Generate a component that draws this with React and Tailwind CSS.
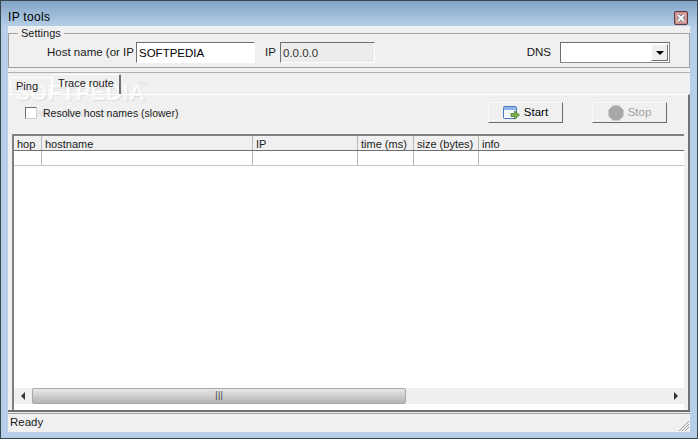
import { useState } from "react";

const columns = [
  { label: "hop", w: "w-[28px]" },
  { label: "hostname", w: "w-[211px]" },
  { label: "IP", w: "w-[105px]" },
  { label: "time (ms)", w: "w-[56px]" },
  { label: "size (bytes)", w: "w-[65px]" },
  { label: "info", w: "flex-1" },
];

const StartIcon = () => (
  <svg width="17" height="16" viewBox="0 0 17 16">
    <rect x="0.5" y="1.5" width="13" height="12" rx="1" fill="#f4f8fd" stroke="#4a78b8" />
    <rect x="1" y="2" width="12" height="3" fill="#8fb4e6" />
    <path d="M8 8.5h3.5V6l5 4-5 4v-2.5H8z" fill="#7fb04e" stroke="#4c7f2c" strokeWidth="0.8" />
  </svg>
);

const StopIcon = () => (
  <svg width="16" height="16" viewBox="0 0 16 16">
    <polygon points="5,0.5 11,0.5 15.5,5 15.5,11 11,15.5 5,15.5 0.5,11 0.5,5" fill="#a8a8a8" />
  </svg>
);

const CloseIcon = () => (
  <svg width="14" height="14" viewBox="0 0 14 14">
    <rect x="0.5" y="0.5" width="13" height="13" rx="1.5" fill="#c98a8a" stroke="#5e3a3e" />
    <rect x="2" y="2" width="10" height="10" fill="#d9a3a0" />
    <path d="M4 4l6 6M10 4l-6 6" stroke="#6b6f78" strokeWidth="3.4" />
    <path d="M4 4l6 6M10 4l-6 6" stroke="#fff" strokeWidth="2" />
  </svg>
);

const ToolButton = ({ icon, children, disabled }) => (
  <button
    className={`flex h-[21px] w-[75px] items-center justify-center gap-[4px] border border-t-[#fafafa] border-l-[#fafafa] border-r-[#6a6a6a] border-b-[#6a6a6a] bg-[#f0f0f0] text-[11.5px] ${
      disabled ? "text-[#a0a0a0]" : "text-black"
    }`}
  >
    {icon}
    {children}
  </button>
);

const Row = ({ header }) => (
  <div className={`flex h-[15px] shrink-0 border-b ${header ? "border-[#707070] bg-[#f0f0f0]" : "border-[#c4c4c4] bg-white"}`}>
    {columns.map((c) => (
      <div key={c.label} className={`${c.w} h-full shrink-0 border-r border-[#b8b8b8] px-[3px] text-[11px] leading-[16px] whitespace-nowrap last:border-r-0`}>
        {header ? c.label : ""}
      </div>
    ))}
  </div>
);

export default function App() {
  const [slow, setSlow] = useState(false);
  return (
    <div className="flex h-[439px] w-[698px] flex-col overflow-hidden border border-[#37474f] bg-[#b7cfe8] px-[7px] pb-[6px] font-['Liberation_Sans',sans-serif] text-[10.5px] leading-none text-[#1a1a1a]">
      {/* Title bar */}
      <div className="-mx-[7px] -mb-px flex h-[26px] shrink-0 items-end justify-between bg-gradient-to-b from-[#84a5c7] to-[#b7cfe8] pr-[9px] pl-[7px] pb-[2px]">
        <span className="pb-[2px] text-[12px] tracking-[0.3px] text-black">IP tools</span>
        <CloseIcon />
      </div>

      <div className="relative flex flex-1 flex-col bg-[#f0f0f0]">
        {/* Watermark sits behind the controls */}
        <span className="pointer-events-none absolute top-[56px] left-[7px] text-[22px] font-bold tracking-[0.5px] text-white/80 [text-shadow:1px_1px_0_#dcdcdc]">
          SOFTPEDIA
        </span>
        <span className="pointer-events-none absolute top-[55px] left-[131px] text-[6px] text-[#e0e0e0]">TM</span>
        <span className="pointer-events-none absolute top-[83px] left-[25px] text-[9px] text-[#dcdcdc]">www.softpedia.com</span>

        <div className="relative z-10 flex flex-1 flex-col">
          {/* Settings */}
          <fieldset className="mx-0 mt-[1px] h-[41px] shrink-0 border border-[#a0a0a0] pr-0 pl-0">
            <legend className="ml-[9px] px-[3px] text-[11px] leading-[12px]">Settings</legend>
            <div className="flex items-center pt-[3px]">
              <span className="ml-[38px] w-[89px] text-[11.5px] whitespace-nowrap">Host name (or IP</span>
              <input
                readOnly
                value="SOFTPEDIA"
                className="h-[21px] w-[119px] border border-t-[#707070] border-l-[#707070] border-r-white border-b-white bg-white px-[2px] text-[11.5px] text-black outline-none"
              />
              <span className="ml-[10px] w-[15px] text-[11.5px]">IP</span>
              <input
                readOnly
                value="0.0.0.0"
                className="h-[21px] w-[95px] border border-t-[#707070] border-l-[#707070] border-r-white border-b-white bg-[#ececec] px-[2px] text-[11.5px] text-[#333] outline-none"
              />
              <span className="mr-[9px] ml-auto text-[11.5px]">DNS</span>
              <div className="mr-[19px] flex h-[21px] w-[110px] justify-end border border-t-[#707070] border-l-[#707070] border-r-[#8a8a8a] border-b-[#8a8a8a] bg-white p-px">
                <div className="flex w-[17px] items-center justify-center border border-t-white border-l-white border-r-[#707070] border-b-[#707070] bg-[#f0f0f0]">
                  <div className="h-0 w-0 border-x-[4px] border-t-[4px] border-x-transparent border-t-black" />
                </div>
              </div>
            </div>
          </fieldset>

          <div className="mt-[4px] flex h-[22px] shrink-0 items-end border-t border-[#b0b0b0] pl-[2px]">
            <div className="flex h-[17px] w-[42px] items-center justify-start rounded-t-[2px] border border-b-0 border-white pl-[5px] text-[11px]">Ping</div>
            <div className="flex h-[20px] w-[69px] items-start justify-center rounded-t-[2px] border-t border-l border-t-white border-l-white border-r-2 border-r-[#707070] pt-[3px] text-[11px]">
              Trace route
            </div>
          </div>

          {/* Tab panel */}
          <div className="flex min-h-0 flex-1 flex-col border-t border-r-2 border-b-2 border-t-white border-r-[#707070] border-b-[#707070] pr-[4px] pl-[4px]">
            <div className="flex h-[39px] shrink-0 items-start pt-[7px]">
              <label className="mt-[5px] ml-[13px] flex items-center gap-[6px]">
                <input
                  type="checkbox"
                  checked={slow}
                  onChange={(e) => setSlow(e.target.checked)}
                  className="h-[12px] w-[12px] appearance-none border border-t-[#707070] border-l-[#707070] border-r-[#d0d0d0] border-b-[#d0d0d0] bg-white"
                />
                Resolve host names (slower)
              </label>
              <div className="ml-auto flex gap-[29px] pr-[17px]">
                <ToolButton icon={<StartIcon />}>Start</ToolButton>
                <ToolButton icon={<StopIcon />} disabled>Stop</ToolButton>
              </div>
            </div>

            {/* Route table */}
            <div className="flex min-h-0 flex-1 flex-col border-t-2 border-l-2 border-t-[#808080] border-l-[#808080] bg-white">
              <Row header />
              <Row />
              <div className="flex-1" />
              <div className="mb-[6px] flex h-[16px] shrink-0 items-center bg-[#efefef] text-black">
                <div className="flex w-[18px] justify-center">
                  <div className="h-0 w-0 border-y-[4px] border-r-[4px] border-y-transparent border-r-[#333]" />
                </div>
                <div className="flex h-full w-[374px] items-center justify-center rounded-[2px] border border-[#a8a8a8] bg-gradient-to-b from-[#e8e8e8] to-[#b4b4b4] font-['DejaVu_Sans',sans-serif] text-[8px] text-[#333]">
                  |||
                </div>
                <div className="ml-auto flex w-[17px] justify-center">
                  <div className="h-0 w-0 border-y-[4px] border-l-[4px] border-y-transparent border-l-[#333]" />
                </div>
              </div>
            </div>
          </div>

          {/* Status bar */}
          <div className="relative mt-[1px] flex h-[19px] shrink-0 items-center border-t border-[#a0a0a0] pl-[2px] text-[11.5px]">
            Ready
            <svg className="absolute right-0 bottom-0" width="12" height="12" viewBox="0 0 12 12">
              <path d="M11 1L1 11M11 4L4 11M11 7L7 11" stroke="#9a9a9a" strokeWidth="1" />
            </svg>
          </div>
        </div>
      </div>
    </div>
  );
}
